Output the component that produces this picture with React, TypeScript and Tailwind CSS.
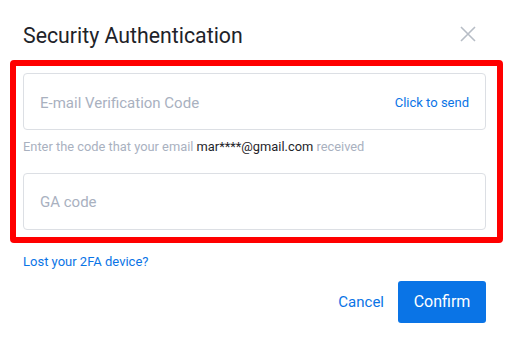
import React from "react";

export default function App() {
  return (
    <div className="w-[509px] h-[339px] bg-white font-['Roboto','Liberation_Sans',sans-serif] overflow-hidden">
      {/* Header */}
      <div className="flex items-center justify-between pl-[23px] pr-[33px] pt-[22px] h-[60px] pb-[10px]">
        <h3 className="text-[21.3px] leading-[28px] text-[#1e2329]">Security Authentication</h3>
        <button className="w-[16px] h-[16px] text-[#b7bdc6] -mt-[4px]">
          <svg viewBox="0 0 16 16" width="16" height="16" fill="none" stroke="currentColor" strokeWidth="1.6">
            <path d="M1 1L15 15M15 1L1 15" />
          </svg>
        </button>
      </div>

      {/* Highlighted form */}
      <div className="ml-[10px] w-[493px] border-[6px] border-[#ff0000] rounded-[4px] pl-[7px] pr-[11px] pt-[7px] pb-[7px]">
        <div className="flex items-center justify-between h-[57px] border border-[#dcdfe4] rounded-[4px] pl-[16px] pr-[16px] pt-[3px]">
          <span className="text-[15px] text-[#a9b1bf]">E-mail Verification Code</span>
          <span className="text-[13px] text-[#0a74e6]">Click to send</span>
        </div>
        <p className="text-[12.85px] leading-[18px] mt-[8px] mb-[17px] text-[#a9b1bf]">
          Enter the code that your email <span className="text-[#1e2329]">mar****@gmail.com</span> received
        </p>
        <div className="flex items-center h-[57px] border border-[#dcdfe4] rounded-[4px] pl-[16px] pt-[2px]">
          <span className="text-[15px] text-[#a9b1bf]">GA code</span>
        </div>
      </div>

      <div className="pl-[23px] pt-[6px]">
        <a className="text-[13px] leading-[18px] text-[#0a74e6]">Lost your 2FA device?</a>
      </div>

      {/* Actions */}
      <div className="flex items-center justify-end gap-[14px] pr-[23px] mt-[8px]">
        <button className="text-[15px] text-[#0a74e6]">Cancel</button>
        <button className="w-[88px] h-[42px] rounded-[3px] bg-[#0a74e6] text-white text-[16px]">Confirm</button>
      </div>
    </div>
  );
}
